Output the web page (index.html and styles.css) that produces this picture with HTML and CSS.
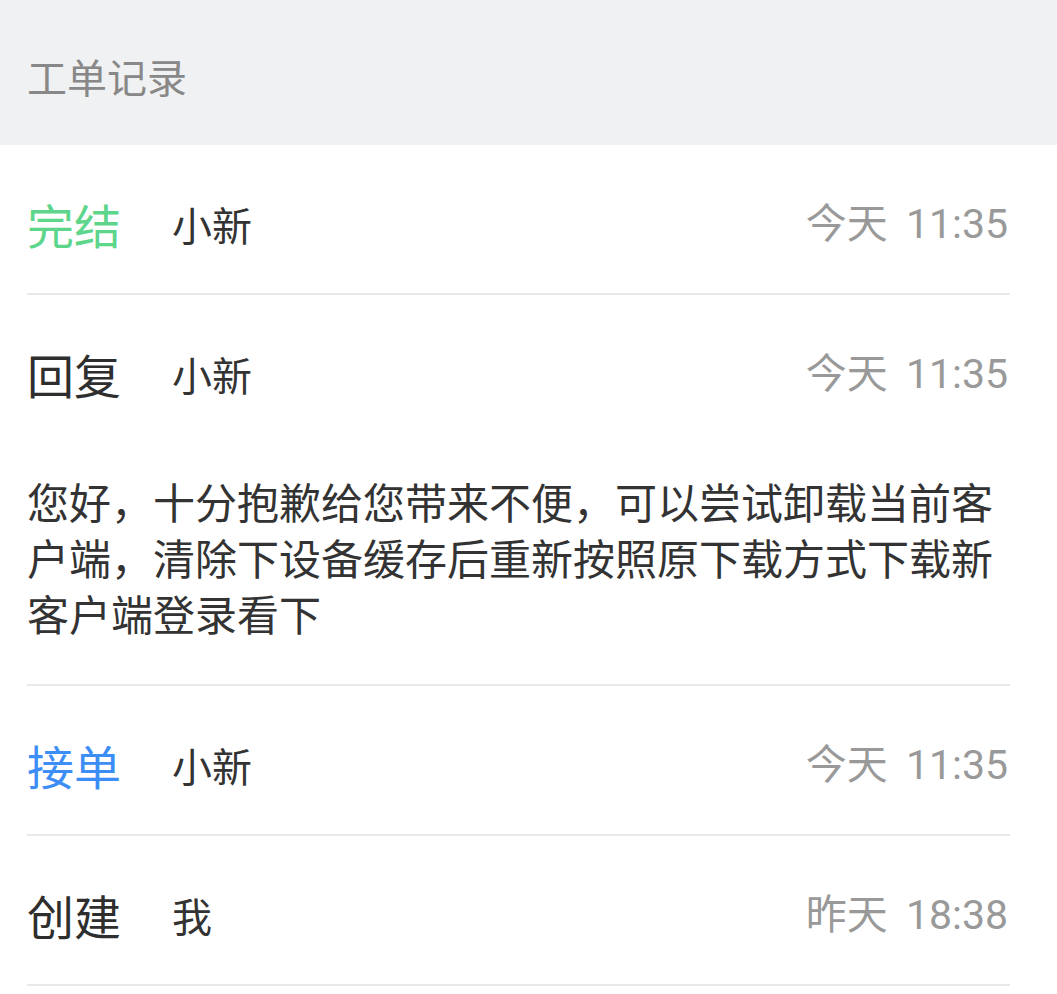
FILE: index.html
```html
<!DOCTYPE html>
<html lang="zh-CN">
<head>
<meta charset="utf-8">
<title>工单记录</title>
<link rel="stylesheet" href="styles.css">
</head>
<body>
<header class="title-bar">工单记录</header>
<ul class="records">
  <li class="record">
    <div class="record-head">
      <span class="status status-done">完结</span>
      <span class="who">小新</span>
      <span class="time">今天 11:35</span>
    </div>
  </li>
  <li class="record">
    <div class="record-head">
      <span class="status">回复</span>
      <span class="who">小新</span>
      <span class="time">今天 11:35</span>
    </div>
    <p class="record-body">您好，十分抱歉给您带来不便，可以尝试卸载当前客户端，清除下设备缓存后重新按照原下载方式下载新客户端登录看下</p>
  </li>
  <li class="record">
    <div class="record-head">
      <span class="status status-accept">接单</span>
      <span class="who">小新</span>
      <span class="time">今天 11:35</span>
    </div>
  </li>
  <li class="record">
    <div class="record-head">
      <span class="status">创建</span>
      <span class="who">我</span>
      <span class="time">昨天 18:38</span>
    </div>
  </li>
</ul>
</body>
</html>
```
FILE: styles.css
```css
html, body {
  margin: 0;
  padding: 0;
  background: #ffffff;
}
body {
  font-family: "Noto Sans CJK SC", "Noto Sans", sans-serif;
  color: #333333;
}
.title-bar {
  height: 145px;
  box-sizing: border-box;
  background: #f0f1f3;
  color: #888888;
  font-size: 40px;
  line-height: 40px;
  padding: 56px 0 0 27px;
}
.records {
  list-style: none;
  margin: 0;
  padding: 0 47px 0 27px;
}
.record {
  border-bottom: 2px solid #e8e8e8;
}
.record-head {
  display: flex;
  align-items: center;
  height: 148px;
  padding-top: 10px;
  box-sizing: border-box;
}
.status {
  width: 145px;
  flex: none;
  font-size: 47px;
  line-height: 50px;
  color: #2e2e2e;
}
.status-done {
  color: #5dd68c;
}
.status-accept {
  color: #3c8df6;
}
.who {
  flex: 1;
  font-size: 40px;
  line-height: 50px;
  color: #333333;
}
.time {
  font-family: Roboto, "Noto Sans CJK SC", sans-serif;
  font-size: 41px;
  line-height: 50px;
  color: #999999;
  padding-right: 2px;
  word-spacing: 8px;
}
.record-body {
  margin: 0;
  padding: 30px 0 43px;
  font-size: 42px;
  line-height: 56px;
  color: #333333;
}
```
